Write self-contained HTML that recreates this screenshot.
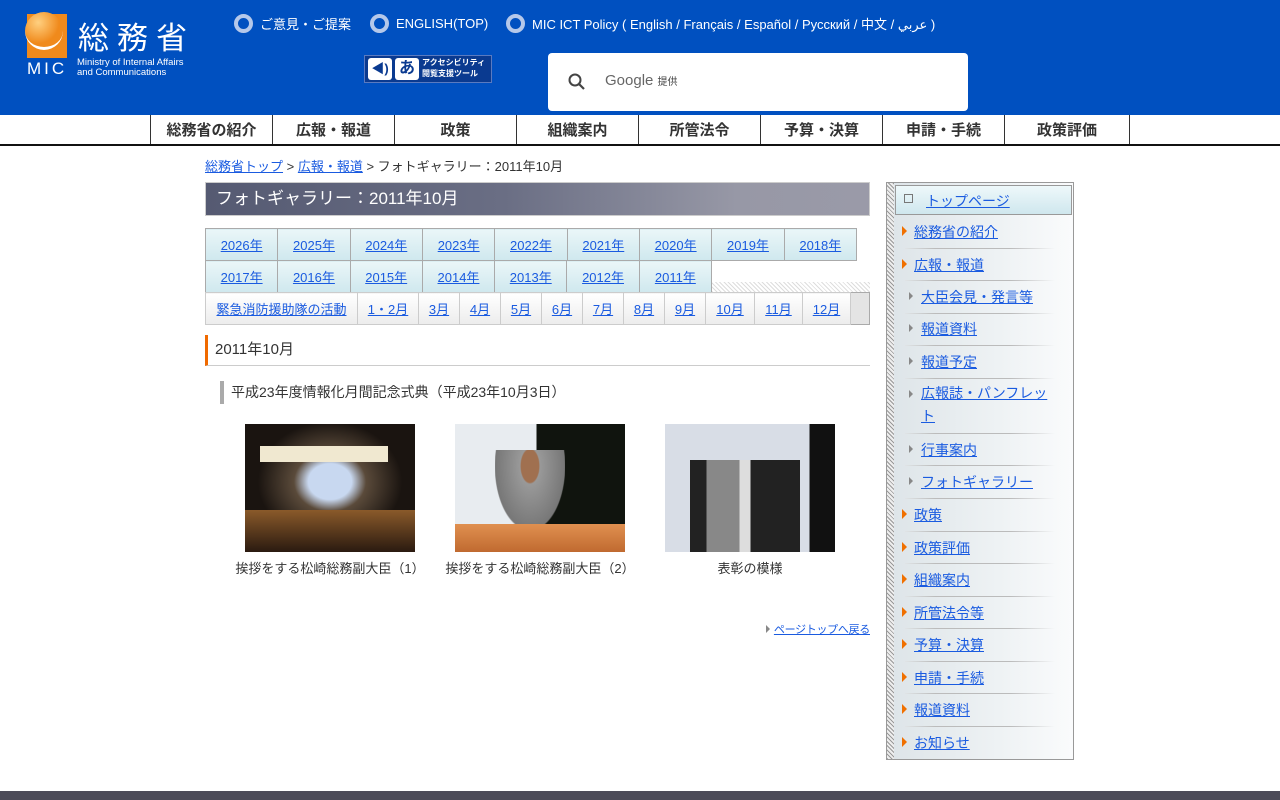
<!DOCTYPE html><html><head><meta charset="utf-8"><style>
*{margin:0;padding:0;box-sizing:border-box}
body{width:1280px;height:800px;position:relative;overflow:hidden;background:#fff;font-family:"Liberation Sans","Noto Sans CJK JP",sans-serif;font-size:13px;color:#333}
a{color:#1a5be0;text-decoration:underline}
.abs{position:absolute}
#hd{left:0;top:0;width:1280px;height:115px;background:#0050c0}
.rad{color:#fff;font-size:13px;top:14px;display:flex;align-items:center}
.rad i{display:inline-block;width:19px;height:19px;border-radius:50%;border:4px solid #b5c8ea;background:#0050c0;margin-right:7px}
#nav{left:0;top:115px;width:1280px;height:31px;border-bottom:2px solid #111;background:#fff}
#nav div{position:absolute;top:0;height:29px;width:122px;border-left:1px solid #333;text-align:center;font-weight:bold;font-size:15px;line-height:32px;color:#333}
table{border-collapse:collapse;table-layout:fixed}
.yr td{border:1px solid #aaa;height:32px;text-align:center;background:linear-gradient(#eaf6f8,#cfe8ee);font-size:13px}
.mo td{border:1px solid #ccc;height:32px;text-align:center;background:linear-gradient(#fff,#ececec);font-size:13px}
.sb{position:absolute;left:914px;font-size:14px}
.sb.s{left:921px}
.tri{position:absolute;width:0;height:0;border-top:5px solid transparent;border-bottom:5px solid transparent;border-left:5px solid #f07000}
.tri.g{border-left-color:#888;border-top-width:4px;border-bottom-width:4px;border-left-width:4px}
.sep{position:absolute;left:905px;width:150px;height:1px;background:linear-gradient(90deg,#e0e4e6,#bbb 20%,#bbb 70%,rgba(200,200,200,0))}
</style></head><body>
<div id="hd" class="abs">
 <div class="abs" style="left:27px;top:14px;width:40px;height:44px;background:#f08a1c"></div>
 <div class="abs" style="left:25px;top:12px;width:38px;height:38px;border-radius:50%;background:radial-gradient(circle at 35% 30%,#ffd080,#f08a1c 60%);border-bottom:3px solid #fff"></div>
 <div class="abs" style="left:78px;top:16px;color:#fff;font-size:31px;letter-spacing:8px;font-family:'Noto Sans CJK JP',sans-serif;line-height:40px">総務省</div>
 <div class="abs" style="left:27px;top:59px;color:#fff;font-size:17px;letter-spacing:3px">MIC</div>
 <div class="abs" style="left:77px;top:58px;color:#fff;font-size:9.5px;line-height:10px">Ministry of Internal Affairs<br>and Communications</div>
 <div class="abs rad" style="left:234px"><i></i>ご意見・ご提案</div>
 <div class="abs rad" style="left:370px"><i></i>ENGLISH(TOP)</div>
 <div class="abs rad" style="left:506px"><i></i>MIC ICT Policy ( English / Français / Español / Русский / 中文 / عربي )</div>
 <div class="abs" style="left:364px;top:55px;width:128px;height:28px;background:#0a3a90;border:1px solid #5a7ac0"></div>
 <div class="abs" style="left:368px;top:58px;width:24px;height:22px;background:#fff;border-radius:3px;color:#0a3a90;font-size:13px;text-align:center;line-height:22px;font-weight:bold">◀)</div>
 <div class="abs" style="left:395px;top:58px;width:24px;height:22px;background:#fff;border-radius:3px;color:#0a3a90;font-size:16px;text-align:center;line-height:22px;font-weight:bold">あ</div>
 <div class="abs" style="left:422px;top:57px;color:#fff;font-size:8px;line-height:11px;font-weight:bold">アクセシビリティ<br>閲覧支援ツール</div>
 <div class="abs" style="left:548px;top:53px;width:420px;height:58px;background:#fff;border-radius:4px"></div>
 <svg class="abs" style="left:567px;top:72px" width="20" height="20" viewBox="0 0 20 20"><circle cx="8" cy="8" r="5.5" fill="none" stroke="#444" stroke-width="2"/><path d="M12 12l5 5" stroke="#444" stroke-width="2.2"/></svg>
 <div class="abs" style="left:605px;top:72px;color:#666;font-size:15px">Google <span style="font-size:10px;color:#444">提供</span></div>
</div>
<div id="nav" class="abs">
 <div style="left:150px">総務省の紹介</div><div style="left:272px">広報・報道</div><div style="left:394px">政策</div><div style="left:516px">組織案内</div><div style="left:638px">所管法令</div><div style="left:760px">予算・決算</div><div style="left:882px">申請・手続</div><div style="left:1004px;width:126px;border-right:1px solid #333">政策評価</div>
</div>
<div class="abs" style="left:205px;top:156px;font-size:13px"><a href="#">総務省トップ</a> &gt; <a href="#">広報・報道</a> &gt; フォトギャラリー：2011年10月</div>
<div class="abs" style="left:205px;top:182px;width:665px;height:34px;background:linear-gradient(90deg,#555a72,#6a6e84 45%,#9798a6 80%,#9a9aa8);border:1px solid #ccc;color:#fff;font-size:17px;line-height:32px;padding-left:10px">フォトギャラリー：2011年10月</div>
<table class="abs yr" style="left:205px;top:228px;width:652px">
<tr><td><a href="#">2026年</a></td><td><a href="#">2025年</a></td><td><a href="#">2024年</a></td><td><a href="#">2023年</a></td><td><a href="#">2022年</a></td><td><a href="#">2021年</a></td><td><a href="#">2020年</a></td><td><a href="#">2019年</a></td><td><a href="#">2018年</a></td></tr>
</table>
<table class="abs yr" style="left:205px;top:260px;width:507px">
<tr><td><a href="#">2017年</a></td><td><a href="#">2016年</a></td><td><a href="#">2015年</a></td><td><a href="#">2014年</a></td><td><a href="#">2013年</a></td><td><a href="#">2012年</a></td><td><a href="#">2011年</a></td></tr>
</table>
<div class="abs" style="left:712px;top:282px;width:158px;height:10px;background:repeating-linear-gradient(45deg,#ddd 0 1px,#fff 1px 3px)"></div>
<div class="abs" style="left:205px;top:292px;width:665px;height:33px;background:#e4e4e4;border:1px solid #aaa"></div>
<table class="abs mo" style="left:205px;top:292px;width:645px">
<tr><td style="width:152px"><a href="#">緊急消防援助隊の活動</a></td><td style="width:61px"><a href="#">1・2月</a></td><td style="width:41px"><a href="#">3月</a></td><td style="width:41px"><a href="#">4月</a></td><td style="width:41px"><a href="#">5月</a></td><td style="width:41px"><a href="#">6月</a></td><td style="width:41px"><a href="#">7月</a></td><td style="width:41px"><a href="#">8月</a></td><td style="width:41px"><a href="#">9月</a></td><td style="width:49px"><a href="#">10月</a></td><td style="width:48px"><a href="#">11月</a></td><td style="width:48px"><a href="#">12月</a></td></tr>
</table>
<div class="abs" style="left:205px;top:335px;width:665px;height:31px;border-left:3px solid #f06a00;border-bottom:1px solid #ccc;font-size:15px;line-height:30px;padding-left:7px">2011年10月</div>
<div class="abs" style="left:220px;top:381px;height:23px;border-left:4px solid #aaa;font-size:14px;line-height:23px;padding-left:7px">平成23年度情報化月間記念式典（平成23年10月3日）</div>
<div class="abs" style="left:245px;top:424px;width:170px;height:128px;background:radial-gradient(ellipse at 50% 45%,#c8d8f0 0 18%,#5a4a3a 30%,#1a1410 60%)"></div>
<div class="abs" style="left:260px;top:446px;width:128px;height:16px;background:#f0e8d0"></div>
<div class="abs" style="left:245px;top:510px;width:170px;height:42px;background:linear-gradient(#8a5a2a,#2a1a10)"></div>
<div class="abs" style="left:455px;top:424px;width:170px;height:128px;background:linear-gradient(90deg,#e8ecf0 0 48%,#10140e 48%)"></div>
<div class="abs" style="left:495px;top:450px;width:70px;height:80px;background:radial-gradient(ellipse at 50% 20%,#a07050 0 18%,#999 20%,#777 70%,transparent 72%)"></div>
<div class="abs" style="left:455px;top:524px;width:170px;height:28px;background:linear-gradient(#e09050,#c06a30)"></div>
<div class="abs" style="left:665px;top:424px;width:170px;height:128px;background:linear-gradient(90deg,#d8dde6 0 85%,#111 85%)"></div>
<div class="abs" style="left:690px;top:460px;width:110px;height:92px;background:linear-gradient(90deg,#222 0 15%,#888 15% 45%,#ddd 45% 55%,#222 55%)"></div>
<div class="abs" style="left:235px;top:558px;width:190px;text-align:center;font-size:13px">挨拶をする松崎総務副大臣（1）</div>
<div class="abs" style="left:445px;top:558px;width:190px;text-align:center;font-size:13px">挨拶をする松崎総務副大臣（2）</div>
<div class="abs" style="left:655px;top:558px;width:190px;text-align:center;font-size:13px">表彰の模様</div>
<div class="abs" style="right:410px;top:621px;font-size:11px;white-space:nowrap;letter-spacing:-0.3px"><span class="tri g" style="position:relative;display:inline-block;top:0;margin-right:4px"></span><a href="#">ページトップへ戻る</a></div>
<!-- sidebar -->
<div class="abs" style="left:886px;top:182px;width:188px;height:578px;border:1px solid #999;background:linear-gradient(90deg,#dde4e8,#eef2f4 60%,#fafbfc)"></div>
<div class="abs" style="left:887px;top:183px;width:7px;height:576px;background:repeating-linear-gradient(45deg,#999 0 1px,#eee 1px 3px)"></div>
<div class="abs" style="left:895px;top:185px;width:177px;height:30px;border:1px solid #999;background:linear-gradient(#eef8fa,#cfe7ee)"></div>
<div class="abs" style="left:904px;top:194px;width:9px;height:9px;border:1px solid #777"></div>
<a class="sb" href="#" style="left:926px;top:191px">トップページ</a>
<div class="tri" style="left:902px;top:226px"></div><a class="sb" href="#" style="top:222px">総務省の紹介</a>
<div class="sep" style="top:248px"></div>
<div class="tri" style="left:902px;top:259px"></div><a class="sb" href="#" style="top:255px">広報・報道</a>
<div class="sep" style="top:280px"></div>
<div class="tri g" style="left:909px;top:292px"></div><a class="sb s" href="#" style="top:287px">大臣会見・発言等</a>
<div class="sep" style="top:313px"></div>
<div class="tri g" style="left:909px;top:324px"></div><a class="sb s" href="#" style="top:319px">報道資料</a>
<div class="sep" style="top:345px"></div>
<div class="tri g" style="left:909px;top:357px"></div><a class="sb s" href="#" style="top:352px">報道予定</a>
<div class="sep" style="top:378px"></div>
<div class="tri g" style="left:909px;top:390px"></div><a class="sb s" href="#" style="top:385px;width:135px;line-height:23px;margin-top:-3px">広報誌・パンフレット</a>
<div class="sep" style="top:433px"></div>
<div class="tri g" style="left:909px;top:445px"></div><a class="sb s" href="#" style="top:440px">行事案内</a>
<div class="sep" style="top:465px"></div>
<div class="tri g" style="left:909px;top:477px"></div><a class="sb s" href="#" style="top:472px">フォトギャラリー</a>
<div class="sep" style="top:498px"></div>
<div class="tri" style="left:902px;top:509px"></div><a class="sb" href="#" style="top:505px">政策</a>
<div class="sep" style="top:531px"></div>
<div class="tri" style="left:902px;top:542px"></div><a class="sb" href="#" style="top:538px">政策評価</a>
<div class="sep" style="top:563px"></div>
<div class="tri" style="left:902px;top:574px"></div><a class="sb" href="#" style="top:570px">組織案内</a>
<div class="sep" style="top:596px"></div>
<div class="tri" style="left:902px;top:607px"></div><a class="sb" href="#" style="top:603px">所管法令等</a>
<div class="sep" style="top:628px"></div>
<div class="tri" style="left:902px;top:639px"></div><a class="sb" href="#" style="top:635px">予算・決算</a>
<div class="sep" style="top:661px"></div>
<div class="tri" style="left:902px;top:672px"></div><a class="sb" href="#" style="top:668px">申請・手続</a>
<div class="sep" style="top:693px"></div>
<div class="tri" style="left:902px;top:704px"></div><a class="sb" href="#" style="top:700px">報道資料</a>
<div class="sep" style="top:726px"></div>
<div class="tri" style="left:902px;top:737px"></div><a class="sb" href="#" style="top:733px">お知らせ</a>
<div class="abs" style="left:0;top:791px;width:1280px;height:9px;background:#4c4b58"></div>
</body></html>
